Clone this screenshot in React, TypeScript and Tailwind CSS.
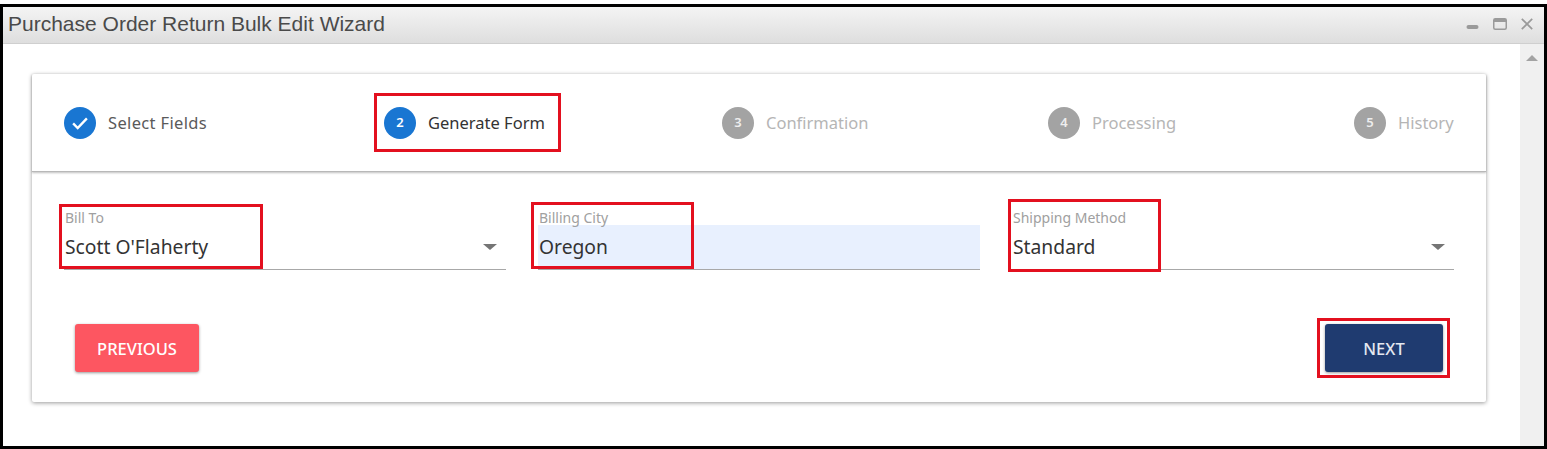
const steps = [
  { n: 1, label: 'Select Fields', state: 'done', width: 'w-[142px]', text: 'tracking-[0.35px]' },
  { n: 2, label: 'Generate Form', state: 'active', width: 'w-[160px]', text: '' },
  { n: 3, label: 'Confirmation', state: 'idle', width: 'w-[148px]', text: '' },
  { n: 4, label: 'Processing', state: 'idle', width: 'w-[128px]', text: '' },
  { n: 5, label: 'History', state: 'idle', width: 'w-[100px]', text: '' },
];

const Step = ({ n, label, state, width, text }: { n: number; label: string; state: string; width: string; text: string }) => {
  const idle = state === 'idle';
  return (
    <div className={`flex items-center gap-[12px] whitespace-nowrap ${width}`}>
      <div className={`flex h-[32px] w-[32px] shrink-0 items-center justify-center rounded-full text-[13px] font-semibold ${idle ? 'bg-[#a3a3a3] text-[#eeeeee]' : 'bg-[#1976d2] text-white'}`}>
        {state === 'done' ? (
          <svg viewBox="0 0 24 24" className="h-[22px] w-[22px]" fill="none" stroke="currentColor" strokeWidth="2.6">
            <path d="M4.5 12.5l5 5L19.5 7" />
          </svg>
        ) : (
          n
        )}
      </div>
      <span className={`pt-[2px] text-[16.5px] ${text} ${idle ? 'text-[#b5b5b5]' : state === 'active' ? 'text-[#333333]' : 'text-[#5a5a5a]'}`}>{label}</span>
    </div>
  );
};

const Field = ({ label, value, select, filled }: { label: string; value: string; select?: boolean; filled?: boolean }) => (
  <div className="relative h-[59px] border-b border-[#a8a8a8]">
    <div className="whitespace-nowrap pl-[1px] text-[14px] leading-[14px] text-[#a0a0a0]">{label}</div>
    <div className={`flex h-[44px] items-center px-[1px] text-[19.3px] text-[#333333] ${filled ? 'bg-[#e8f0fe]' : ''}`}>{value}</div>
    {select && <div className="absolute right-[9px] top-[33px] h-0 w-0 border-x-[7px] border-t-[6px] border-x-transparent border-t-[#757575]" />}
  </div>
);

const App = () => {
  return (
    <div className="relative h-[449px] w-[1547px] overflow-hidden bg-white pt-[4px] font-['Noto_Sans',sans-serif]">
      <div className="flex h-[445px] flex-col border-[3px] border-black">
        {/* Window title bar */}
        <div className="flex h-[37px] shrink-0 items-center justify-between border-b border-[#cfcfcf] bg-gradient-to-b from-[#f4f4f4] to-[#dedede] pb-[3px] pl-[5px] pr-[11px]">
          <span className="font-['Liberation_Sans',sans-serif] text-[21px] leading-[30px] text-[#4a4a4a]">Purchase Order Return Bulk Edit Wizard</span>
          <div className="flex items-center gap-[14px] text-[#9a9a9a]">
            <svg viewBox="0 0 13 12" className="h-[12px] w-[13px]" fill="currentColor">
              <rect x="0.5" y="7" width="12" height="4" rx="2" />
            </svg>
            <svg viewBox="0 0 14 12" className="h-[12px] w-[14px]" fill="none" stroke="currentColor">
              <rect x="0.75" y="0.75" width="12.5" height="10.5" rx="1.5" strokeWidth="1.5" />
              <rect x="1" y="1" width="12" height="3" fill="currentColor" stroke="none" />
            </svg>
            <svg viewBox="0 0 12 12" className="h-[12px] w-[12px]" fill="none" stroke="currentColor" strokeWidth="1.7">
              <path d="M0.8 0.8l10.4 10.4M11.2 0.8L0.8 11.2" />
            </svg>
          </div>
        </div>

        <div className="flex min-h-0 flex-1">
          <div className="min-w-0 flex-1 pl-[29px] pr-[34px] pt-[30px]">
            {/* Wizard card */}
            <div className="h-[328px] rounded-[2px] bg-white shadow-[0_1px_4px_rgba(0,0,0,0.4)]">
              <div className="flex h-[98px] items-center justify-between border-b border-[#b8b8b8] px-[32px] shadow-[0_1px_2px_rgba(0,0,0,0.25)]">
                {steps.map((s) => (
                  <Step key={s.n} {...s} />
                ))}
              </div>
              <div className="grid grid-cols-3 gap-[32px] px-[32px] pt-[39px]">
                <Field label="Bill To" value="Scott O'Flaherty" select />
                <Field label="Billing City" value="Oregon" filled />
                <Field label="Shipping Method" value="Standard" select />
              </div>
              <div className="flex justify-between px-[43px] pt-[54px]">
                <button className="h-[48px] w-[124px] rounded-[3px] bg-[#fd5661] pt-[2px] text-[16.5px] font-medium text-white shadow-[0_1px_3px_rgba(0,0,0,0.4)]">PREVIOUS</button>
                <button className="h-[48px] w-[118px] rounded-[3px] bg-[#1f3b70] pt-[2px] text-[16.5px] font-medium text-[#e4e8f0] shadow-[0_1px_3px_rgba(0,0,0,0.4)]">NEXT</button>
              </div>
            </div>
          </div>
          {/* Scrollbar */}
          <div className="flex w-[24px] shrink-0 justify-center bg-[#f0f0f0] pt-[11px]">
            <div className="h-0 w-0 border-x-[6px] border-b-[6px] border-x-transparent border-b-[#a3a3a3]" />
          </div>
        </div>
      </div>

      {/* Red annotation boxes */}
      <div className="absolute left-[374px] top-[93px] h-[59px] w-[187px] border-[3px] border-[#e3101f]" />
      <div className="absolute left-[59px] top-[204px] h-[65px] w-[204px] border-[3px] border-[#e3101f]" />
      <div className="absolute left-[531px] top-[202px] h-[67px] w-[163px] border-[3px] border-[#e3101f]" />
      <div className="absolute left-[1008px] top-[199px] h-[73px] w-[153px] border-[3px] border-[#e3101f]" />
      <div className="absolute left-[1317px] top-[318px] h-[60px] w-[133px] border-[3px] border-[#e3101f]" />
    </div>
  );
};

export default App;
